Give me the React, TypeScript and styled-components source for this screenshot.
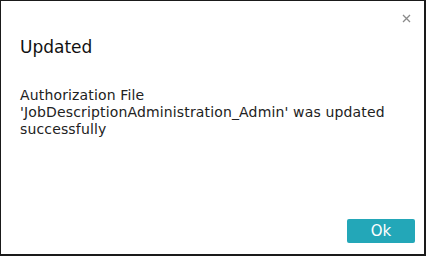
import React from "react";
import styled, { createGlobalStyle } from "styled-components";

const Global = createGlobalStyle`
  html, body { margin: 0; padding: 0; background: #ffffff; }
  body { font-family: "DejaVu Sans", Verdana, sans-serif; }
`;

const Dialog = styled.div`
  box-sizing: border-box;
  width: 426px;
  height: 256px;
  background: #fff;
  border: 1px solid #1a1a1a;
  border-right-width: 2px;
  border-bottom-width: 2px;
  position: relative;
  display: flex;
  flex-direction: column;
  padding: 0 9px 11px 19px;
`;

const Close = styled.button`
  position: absolute;
  top: 10px;
  right: 11px;
  width: 14px;
  height: 14px;
  padding: 0;
  border: none;
  background: transparent;
  display: flex;
  align-items: center;
  justify-content: center;
`;

const Title = styled.h1`
  margin: 35px 0 0;
  font-size: 17px;
  font-weight: normal;
  color: #111;
  line-height: 22px;
`;

const Message = styled.p`
  margin: 29px 0 0;
  font-size: 14px;
  letter-spacing: 0.15px;
  line-height: 17px;
  color: #222;
  width: 390px;
`;

const Footer = styled.div`
  margin-top: auto;
  display: flex;
  justify-content: flex-end;
`;

const OkButton = styled.button`
  width: 68px;
  height: 24px;
  border: none;
  border-radius: 2px;
  background: #23a7b8;
  color: #fff;
  font-family: "DejaVu Sans", Verdana, sans-serif;
  font-size: 15px;
  padding: 0;
`;

export default function App() {
  return (
    <>
      <Global />
      <Dialog>
        <Close aria-label="close">
          <svg width="9" height="9" viewBox="0 0 9 9">
            <path d="M1 1 L8 8 M8 1 L1 8" stroke="#8a8a8a" strokeWidth="1.3" />
          </svg>
        </Close>
        <Title>Updated</Title>
        <Message>
          Authorization File 'JobDescriptionAdministration_Admin' was updated successfully
        </Message>
        <Footer>
          <OkButton>Ok</OkButton>
        </Footer>
      </Dialog>
    </>
  );
}
